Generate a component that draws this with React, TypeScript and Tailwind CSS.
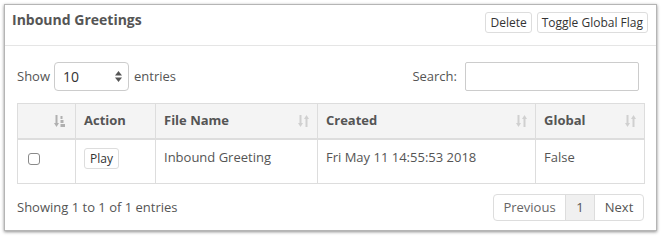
import React from "react";

function SortBoth() {
  return (
    <svg width="11" height="12" viewBox="0 0 11 12" className="shrink-0">
      <g fill="#d0d0d0">
        <rect x="1.5" y="0" width="2" height="9" />
        <polygon points="0,8 5,8 2.5,12" />
        <rect x="7.5" y="3" width="2" height="9" />
        <polygon points="6,4 11,4 8.5,0" />
      </g>
    </svg>
  );
}

function SortAsc() {
  return (
    <svg width="11" height="12" viewBox="0 0 11 12" className="shrink-0">
      <g fill="#b0b0b0">
        <rect x="1.5" y="0" width="2" height="9" />
        <polygon points="0,8 5,8 2.5,12" />
        <rect x="6.5" y="1" width="2" height="3" />
        <rect x="6.5" y="5" width="3" height="3" />
        <rect x="6.5" y="9" width="4.5" height="3" />
      </g>
    </svg>
  );
}

export default function App() {
  const font = { fontFamily: '"Open Sans", "Liberation Sans", Arial, sans-serif' };
  return (
    <div className="w-[664px] h-[237px] bg-white pt-[4px] pl-[4px]" style={font}>
      <div className="w-[653px] h-[227px] bg-white border border-[#b5b5b5] shadow-[0_1px_3px_rgba(0,0,0,0.45)] flex flex-col">
        <div className="h-[41px] border-b border-[#e5e5e5] flex justify-between items-start pl-[7px] pr-[8px] shrink-0">
          <div className="mt-[5px] text-[14px] leading-[20px] font-bold text-[#555]">Inbound Greetings</div>
          <div className="flex gap-[5px] mt-[7px]">
            <button className="h-[21px] px-[4px] border border-[#ddd] rounded-[3px] bg-white text-[12px] leading-[19px] text-[#333]">Delete</button>
            <button className="h-[21px] px-[4px] border border-[#ddd] rounded-[3px] bg-white text-[12px] leading-[19px] text-[#333]">Toggle Global Flag</button>
          </div>
        </div>
        <div className="px-[12px] pt-[16px] flex flex-col">
          <div className="flex justify-between items-center h-[29px] text-[13px] text-[#555]">
            <div className="flex items-center">
              <span>Show</span>
              <div className="ml-[4px] w-[75px] h-[29px] border border-[#ccc] rounded-[4px] flex items-center justify-between pl-[8px] pr-[6px] text-[#333] text-[14px]">
                <span>10</span>
                <svg width="7" height="11" viewBox="0 0 7 11">
                  <polygon points="0,4.5 7,4.5 3.5,0" fill="#555" />
                  <polygon points="0,6.5 7,6.5 3.5,11" fill="#555" />
                </svg>
              </div>
              <span className="ml-[5px]">entries</span>
            </div>
            <div className="flex items-center mr-[5px]">
              <span>Search:</span>
              <div className="ml-[8px] w-[174px] h-[29px] border border-[#ccc] rounded-[2px]" />
            </div>
          </div>
          <table className="mt-[12px] w-[627px] table-fixed border-collapse text-[13px] text-[#555]">
            <colgroup>
              <col className="w-[58px]" />
              <col className="w-[80px]" />
              <col className="w-[162px]" />
              <col className="w-[218px]" />
              <col className="w-[109px]" />
            </colgroup>
            <thead>
              <tr className="h-[35px] bg-[#f4f4f4]">
                <th className="border border-[#ddd] border-b-2 px-[8px] font-bold text-left">
                  <div className="flex justify-end pr-[2px]"><SortAsc /></div>
                </th>
                <th className="border border-[#ddd] border-b-2 px-[8px] font-bold text-left">Action</th>
                <th className="border border-[#ddd] border-b-2 px-[8px] font-bold text-left">
                  <div className="flex justify-between items-center">File Name<SortBoth /></div>
                </th>
                <th className="border border-[#ddd] border-b-2 px-[8px] font-bold text-left">
                  <div className="flex justify-between items-center">Created<SortBoth /></div>
                </th>
                <th className="border border-[#ddd] border-b-2 px-[8px] font-bold text-left">
                  <div className="flex justify-between items-center">Global<SortBoth /></div>
                </th>
              </tr>
            </thead>
            <tbody>
              <tr className="h-[45px]">
                <td className="border border-[#ddd] px-[10px] align-top pt-[13px]">
                  <div className="w-[12px] h-[12px] border border-[#8a8a8a] rounded-[3px] bg-white" />
                </td>
                <td className="border border-[#ddd] px-[8px] align-top pt-[8px]">
                  <button className="h-[21px] px-[5px] border border-[#ddd] rounded-[3px] bg-white text-[12px] leading-[19px] text-[#333]">Play</button>
                </td>
                <td className="border border-[#ddd] px-[8px] align-top pt-[7px] leading-[20px]">Inbound Greeting</td>
                <td className="border border-[#ddd] px-[8px] align-top pt-[7px] leading-[20px]">Fri May 11 14:55:53 2018</td>
                <td className="border border-[#ddd] px-[8px] align-top pt-[7px] leading-[20px]">False</td>
              </tr>
            </tbody>
          </table>
          <div className="mt-[10px] flex justify-between items-center text-[13px] text-[#555]">
            <span>Showing 1 to 1 of 1 entries</span>
            <div className="flex h-[27px] border border-[#ddd] rounded-[4px] overflow-hidden">
              <div className="w-[71px] flex items-center justify-center text-[#666]">Previous</div>
              <div className="w-[30px] flex items-center justify-center bg-[#f0f0f0] border-l border-r border-[#ddd] text-[#555]">1</div>
              <div className="w-[48px] flex items-center justify-center text-[#555]">Next</div>
            </div>
          </div>
        </div>
      </div>
    </div>
  );
}
